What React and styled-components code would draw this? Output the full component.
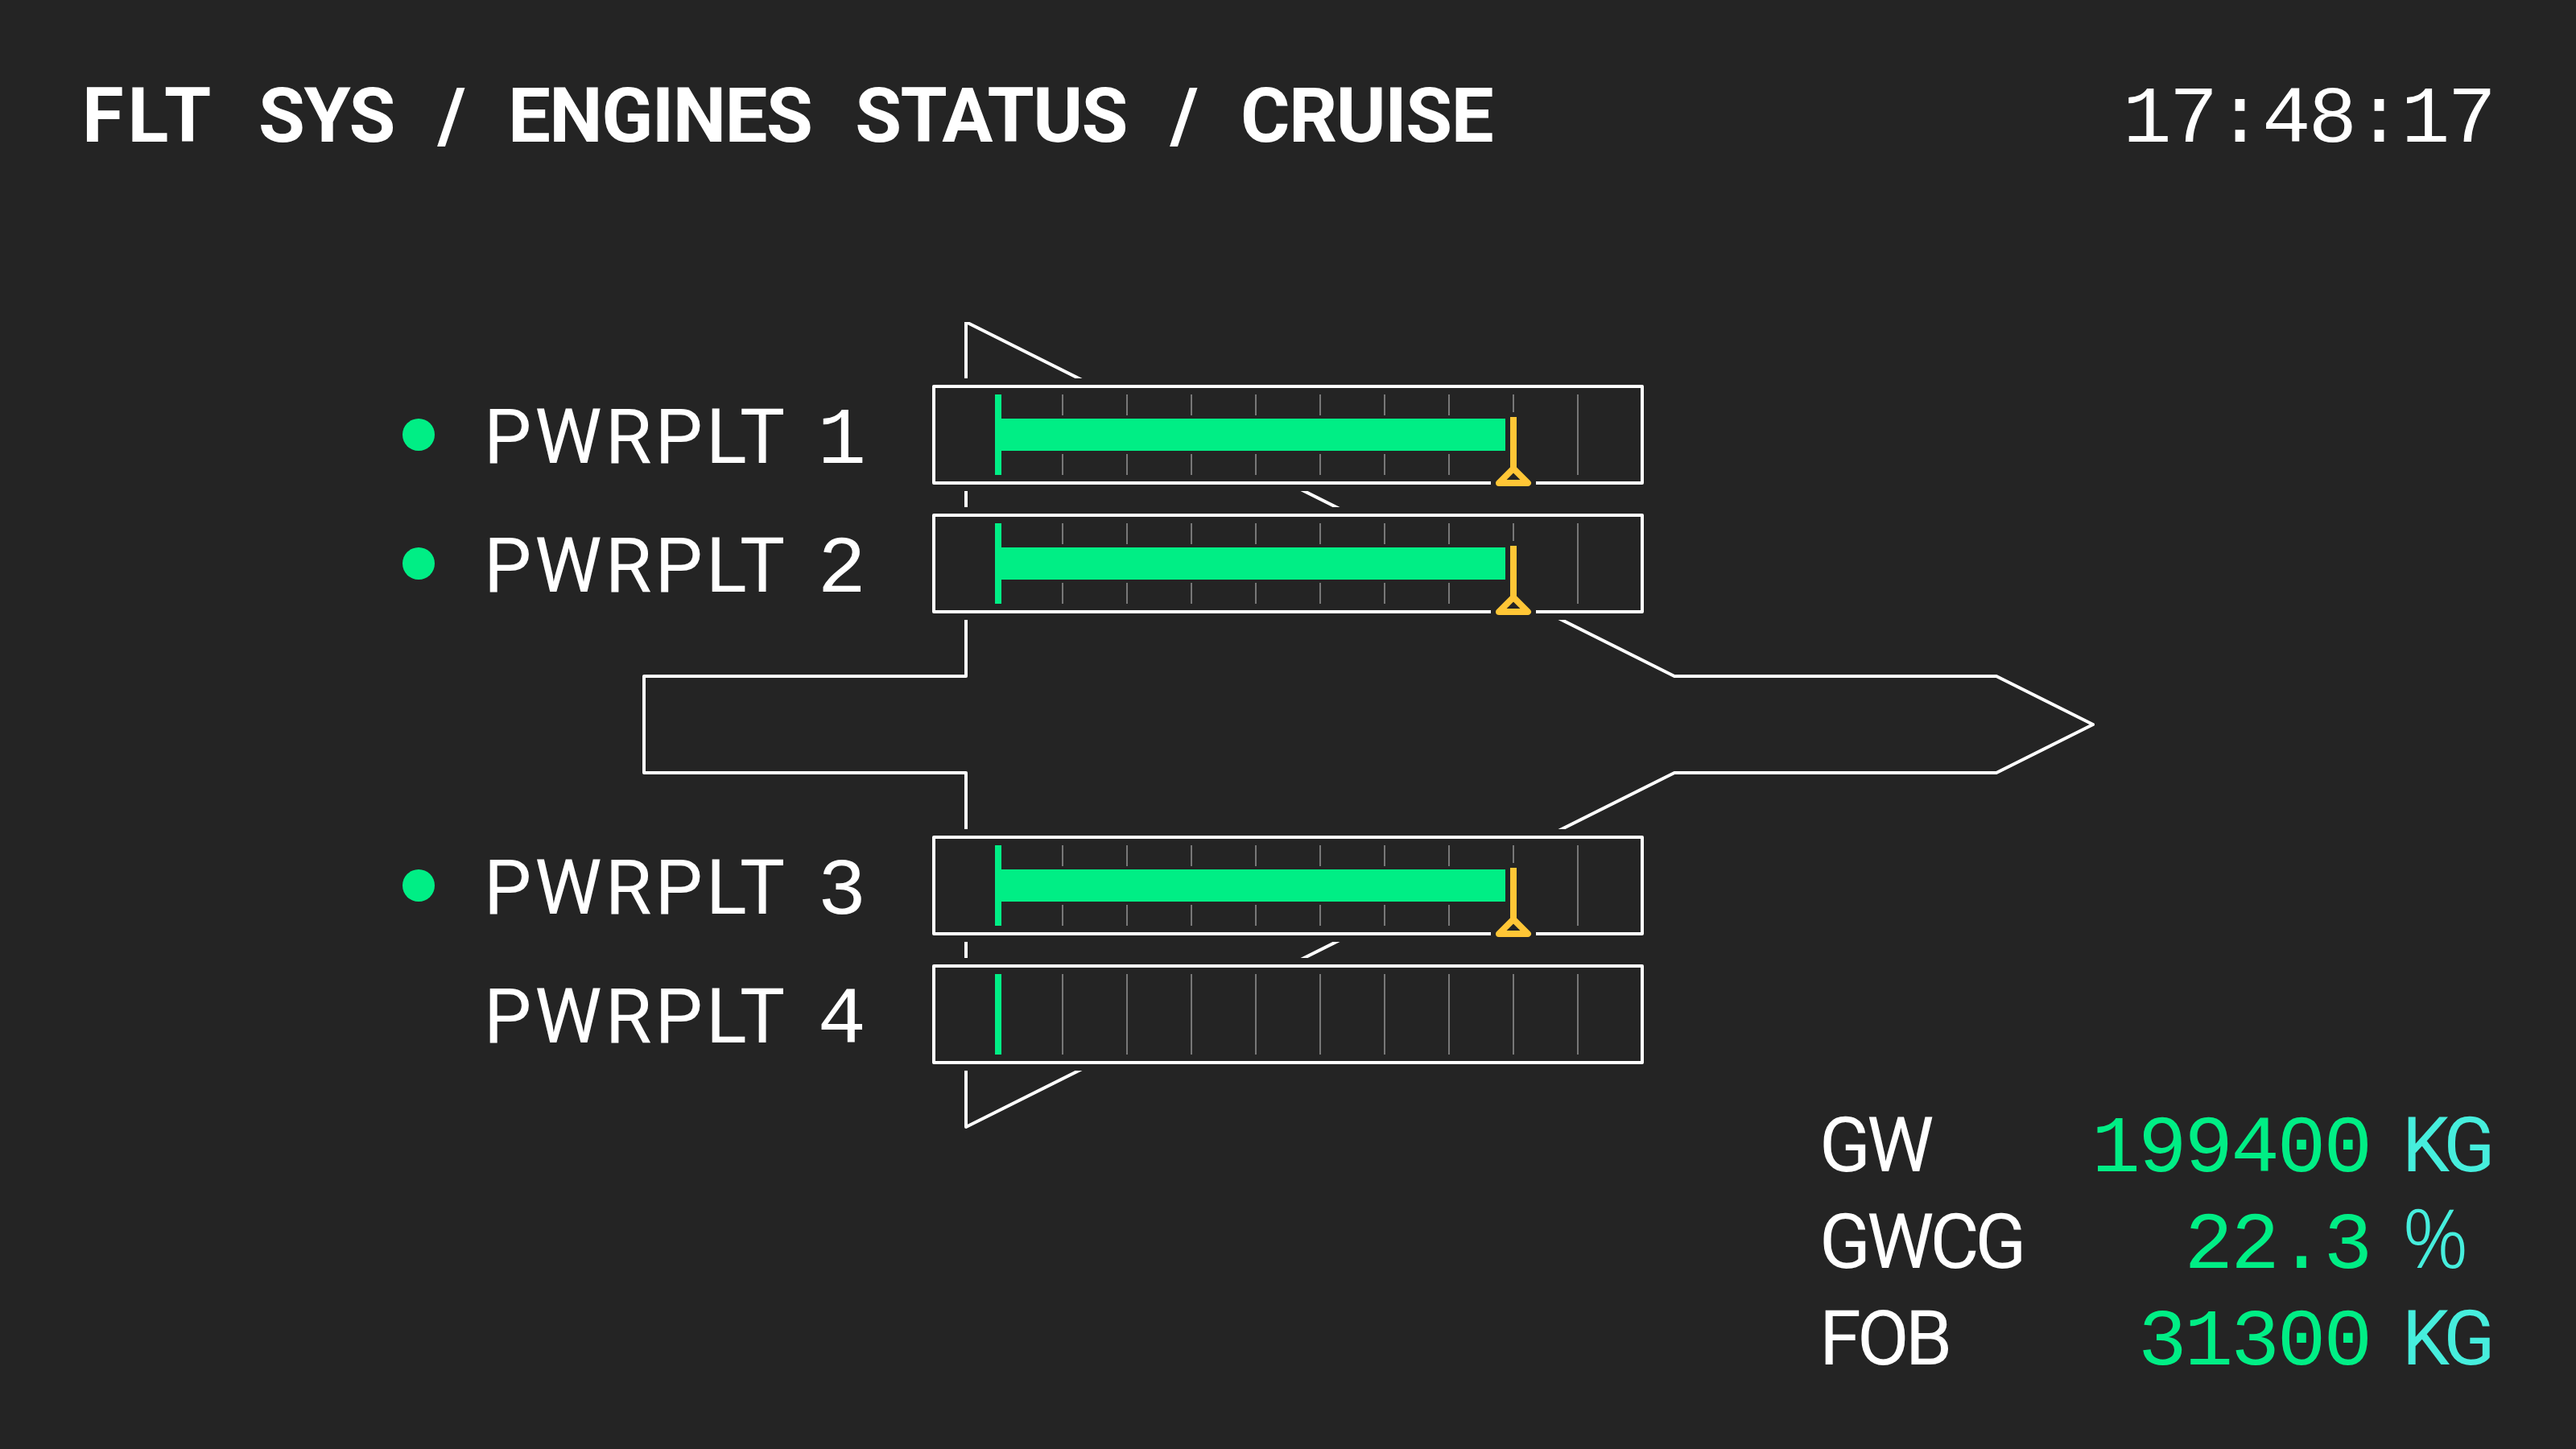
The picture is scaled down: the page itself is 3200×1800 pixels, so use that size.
import React from 'react'
import styled, { createGlobalStyle } from 'styled-components'

const BG = '#242424'
const GREEN = '#00ee85'
const CYAN = '#46eedd'
const YELLOW = '#ffc636'

const GlobalStyle = createGlobalStyle`
  html, body {
    margin: 0;
    padding: 0;
    background: ${BG};
  }
`

const Page = styled.div`
  width: 3200px;
  height: 1800px;
  box-sizing: border-box;
  padding: 84px 102px 0 102px;
  display: flex;
  flex-direction: column;
  background: ${BG};
  color: #fff;
  font-family: 'Liberation Mono', monospace;
  overflow: hidden;
`

const Header = styled.header`
  display: flex;
  justify-content: space-between;
  align-items: baseline;
  height: 120px;
  line-height: 120px;
  font-size: 101px;
`

const Title = styled.h1`
  margin: 0;
  font-family: Roboto, sans-serif;
  font-size: 94px;
  font-weight: 700;
  letter-spacing: -1.5px;
  word-spacing: 32px;
  white-space: pre;
`

const TitleLead = styled.span`
  letter-spacing: 5px;
`

const Clock = styled.div`
  letter-spacing: -3px;
`

const Diagram = styled.main`
  position: relative;
  margin-top: 266px;
  padding-left: 398px;
  display: flex;
  flex-direction: column;
  gap: 260px;
`

const Outline = styled.svg`
  position: absolute;
  left: -102px;
  top: -70px;
  width: 3200px;
  height: 1010px;
`

const OutlinePath = styled.path`
  fill: none;
  stroke: #fff;
  stroke-width: 4;
  stroke-linejoin: round;
`

const EngineGroup = styled.section`
  position: relative;
  display: flex;
  flex-direction: column;
  gap: 20px;
`

const EngineRow = styled.div`
  display: grid;
  grid-template-columns: 101px 549px 900px;
  align-items: center;
  height: 140px;
`

const Dot = styled.span`
  width: 40px;
  height: 40px;
  border-radius: 50%;
  background: ${({ $on }) => ($on ? GREEN : 'transparent')};
`

const EngineName = styled.span`
  margin-top: 10px;
  font-family: Roboto, sans-serif;
  font-size: 94px;
  font-weight: 400;
  letter-spacing: 4px;
  line-height: 120px;
  white-space: pre;
`

const EngineNumber = styled.span`
  margin-left: 11px;
  font-family: 'Liberation Mono', monospace;
  font-size: 101px;
  font-weight: 400;
`

const Gauge = styled.svg`
  display: block;
  width: 900px;
  height: 140px;
`

const Mask = styled.rect`
  fill: ${BG};
`

const Frame = styled.rect`
  fill: none;
  stroke: #fff;
  stroke-width: 4;
  stroke-linejoin: round;
`

const Tick = styled.rect`
  fill: #777;
`

const Level = styled.rect`
  fill: ${GREEN};
`

const MarkerStem = styled.rect`
  fill: ${YELLOW};
`

const MarkerHead = styled.polygon`
  fill: none;
  stroke: ${YELLOW};
  stroke-width: 8;
  stroke-linejoin: round;
`

const Stats = styled.dl`
  margin: 33px -2px 0 0;
  align-self: flex-end;
  display: grid;
  grid-template-columns: 320px 364px 156px;
  grid-auto-rows: 120px;
  align-items: baseline;
  line-height: 120px;
  font-size: 101px;
  letter-spacing: -3px;
`

const StatName = styled.dt`
  margin: 0;
  font-family: Roboto, sans-serif;
  font-size: 94px;
  font-weight: 400;
  letter-spacing: -5px;
`

const StatValue = styled.dd`
  margin: 0;
  text-align: right;
  color: ${GREEN};
`

const StatUnit = styled.dd`
  margin: 0 0 0 40px;
  color: ${CYAN};
  font-family: Roboto, sans-serif;
  font-size: 94px;
  font-weight: 400;
  letter-spacing: -6px;
`

const StatSymbol = styled(StatUnit)`
  font-family: 'Noto Sans', sans-serif;
  font-size: 102px;
  font-weight: 300;
  line-height: 96px;
  letter-spacing: 0;
`

const TICKS = [170, 250, 330, 410, 490, 570, 650, 730, 810]

const GaugeBar = ({ running }) => (
  <Gauge viewBox="0 0 900 140">
    <Mask x="0" y="0" width="900" height="140" />
    <Frame x="10" y="10" width="880" height="120" />
    {TICKS.map((x) => (
      <Tick key={x} x={x - 1} y="20" width="2" height="100" />
    ))}
    <Level x="86" y="20" width="8" height="100" />
    {running && (
      <>
        <Mask x="94" y="46" width="630" height="48" />
        <Level x="94" y="50" width="626" height="40" />
        <Mask x="722" y="42" width="16" height="84" />
        <Mask x="702" y="126" width="56" height="8" />
        <MarkerStem x="726" y="48" width="8" height="66" />
        <MarkerHead points="730,112 748,130 712,130" />
      </>
    )}
  </Gauge>
)

const Engine = ({ number, running }) => (
  <EngineRow>
    <Dot $on={running} />
    <EngineName>
      PWRPLT <EngineNumber>{number}</EngineNumber>
    </EngineName>
    <GaugeBar running={running} />
  </EngineRow>
)

const App = () => (
  <Page>
    <GlobalStyle />
    <Header>
      <Title>
        <TitleLead>FLT</TitleLead> SYS / ENGINES STATUS / CRUISE
      </Title>
      <Clock>17:48:17</Clock>
    </Header>
    <Diagram>
      <Outline viewBox="0 400 3200 1010">
        <OutlinePath d="M2080 840 L1200 400 V840 H800 V960 H1200 V1400 L2080 960 H2480 L2600 900 L2480 840 Z" />
      </Outline>
      <EngineGroup>
        <Engine number={1} running />
        <Engine number={2} running />
      </EngineGroup>
      <EngineGroup>
        <Engine number={3} running />
        <Engine number={4} />
      </EngineGroup>
    </Diagram>
    <Stats>
      <StatName>GW</StatName>
      <StatValue>199400</StatValue>
      <StatUnit>KG</StatUnit>
      <StatName>GWCG</StatName>
      <StatValue>22.3</StatValue>
      <StatSymbol>%</StatSymbol>
      <StatName>FOB</StatName>
      <StatValue>31300</StatValue>
      <StatUnit>KG</StatUnit>
    </Stats>
  </Page>
)

export default App
